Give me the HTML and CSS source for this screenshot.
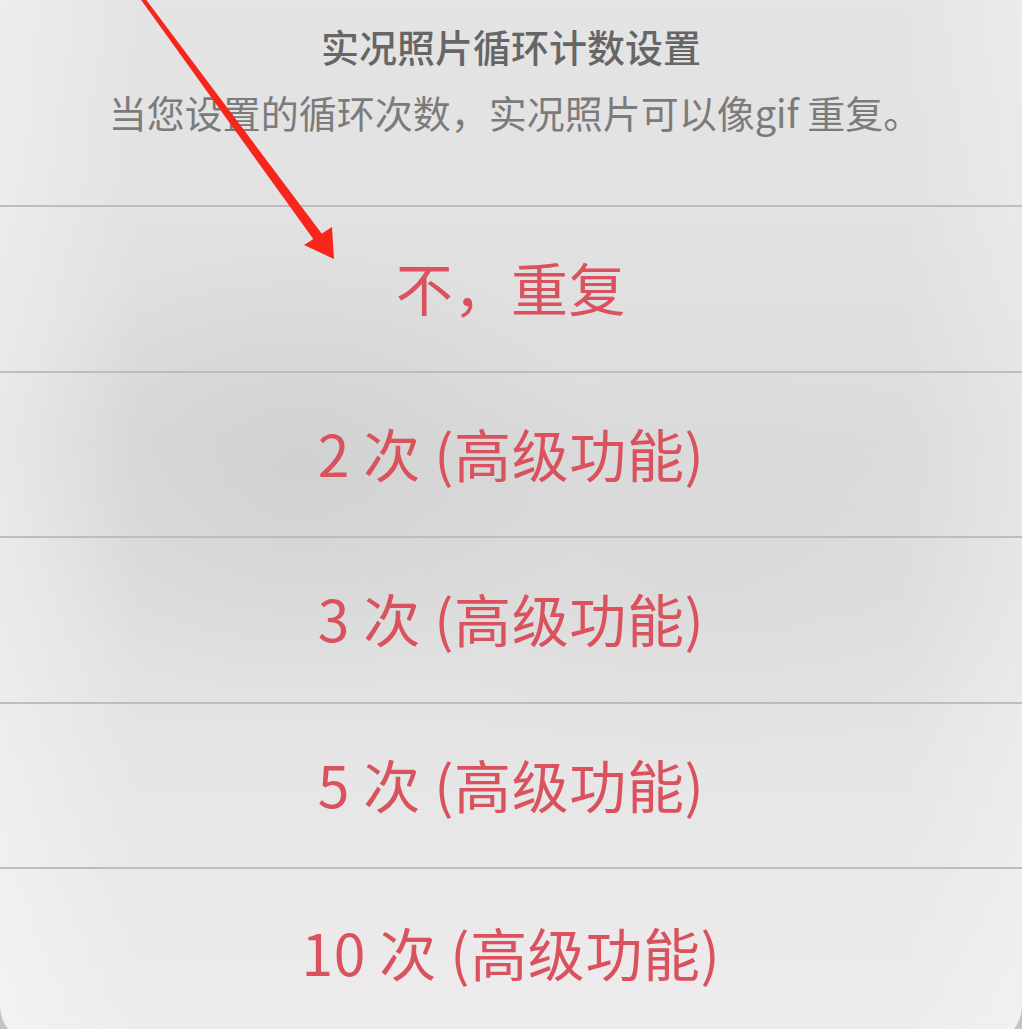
FILE: index.html
```html
<!DOCTYPE html>
<html lang="zh-CN">
<head>
<meta charset="utf-8">
<title>实况照片循环计数设置</title>
<link rel="stylesheet" href="styles.css">
</head>
<body>
<div class="screen">
  <div class="sheet">
    <div class="sheet-header">
      <div class="sheet-title">实况照片循环计数设置</div>
      <div class="sheet-message">当您设置的循环次数，实况照片可以像gif 重复。</div>
    </div>
    <div class="sheet-action">不，重复</div>
    <div class="sheet-action">2 次 (高级功能)</div>
    <div class="sheet-action">3 次 (高级功能)</div>
    <div class="sheet-action">5 次 (高级功能)</div>
    <div class="sheet-action last">10 次 (高级功能)</div>
  </div>
  <svg class="annotation-arrow" width="1022" height="1029" viewBox="0 0 1022 1029" aria-hidden="true">
    <polygon points="140.4,-1 145.6,-1 322,234 314,240" fill="#f7261d"/>
    <polygon points="304,245 332,227 334,259" fill="#f7261d"/>
  </svg>
</div>
</body>
</html>
```

FILE: styles.css
```css
html, body {
  margin: 0;
  padding: 0;
}

body {
  width: 1022px;
  height: 1029px;
  overflow: hidden;
  background: #c9c9c9;
  font-family: "Noto Sans CJK SC", "Noto Sans", "Liberation Sans", sans-serif;
}

.screen {
  position: relative;
  width: 1022px;
  height: 1029px;
  overflow: hidden;
  background: linear-gradient(to bottom, #cfcfcf, #c4c4c4);
}

.sheet {
  width: 1022px;
  height: 1045px;
  border-radius: 0 0 40px 40px;
  overflow: hidden;
  display: flex;
  flex-direction: column;
  background:
    linear-gradient(to right, rgba(255,255,255,0.35) 0, rgba(255,255,255,0) 140px),
    linear-gradient(to left, rgba(255,255,255,0.25) 0, rgba(255,255,255,0) 120px),
    radial-gradient(ellipse 300px 240px at 300px 470px, rgba(195,195,195,0.45), rgba(195,195,195,0)),
    radial-gradient(ellipse 380px 200px at 700px 560px, rgba(205,205,205,0.3), rgba(205,205,205,0)),
    linear-gradient(to bottom, #e5e4e4 0%, #e2e2e2 20%, #dcdcdc 42%, #e0e0e0 58%, #e7e6e6 75%, #eeecec 100%);
}

.sheet-header {
  height: 205px;
  box-sizing: border-box;
  padding-top: 22px;
  display: flex;
  flex-direction: column;
  align-items: center;
  gap: 18px;
  flex: none;
}

.sheet-title {
  font-size: 38px;
  line-height: 48px;
  font-weight: 500;
  color: #666666;
}

.sheet-message {
  font-size: 38px;
  line-height: 48px;
  color: #7b7b7b;
  padding-left: 8px;
}

.sheet-action {
  flex: none;
  height: 165.5px;
  box-sizing: border-box;
  border-top: 2px solid #bdbdbd;
  display: flex;
  align-items: center;
  justify-content: center;
  font-size: 57px;
  line-height: 1;
  letter-spacing: 0.6px;
  color: #d9525d;
  padding-bottom: 4px;
}

.sheet-action.last {
  height: 178px;
  padding-bottom: 12px;
}

.annotation-arrow {
  position: absolute;
  left: 0;
  top: 0;
  pointer-events: none;
}
```
